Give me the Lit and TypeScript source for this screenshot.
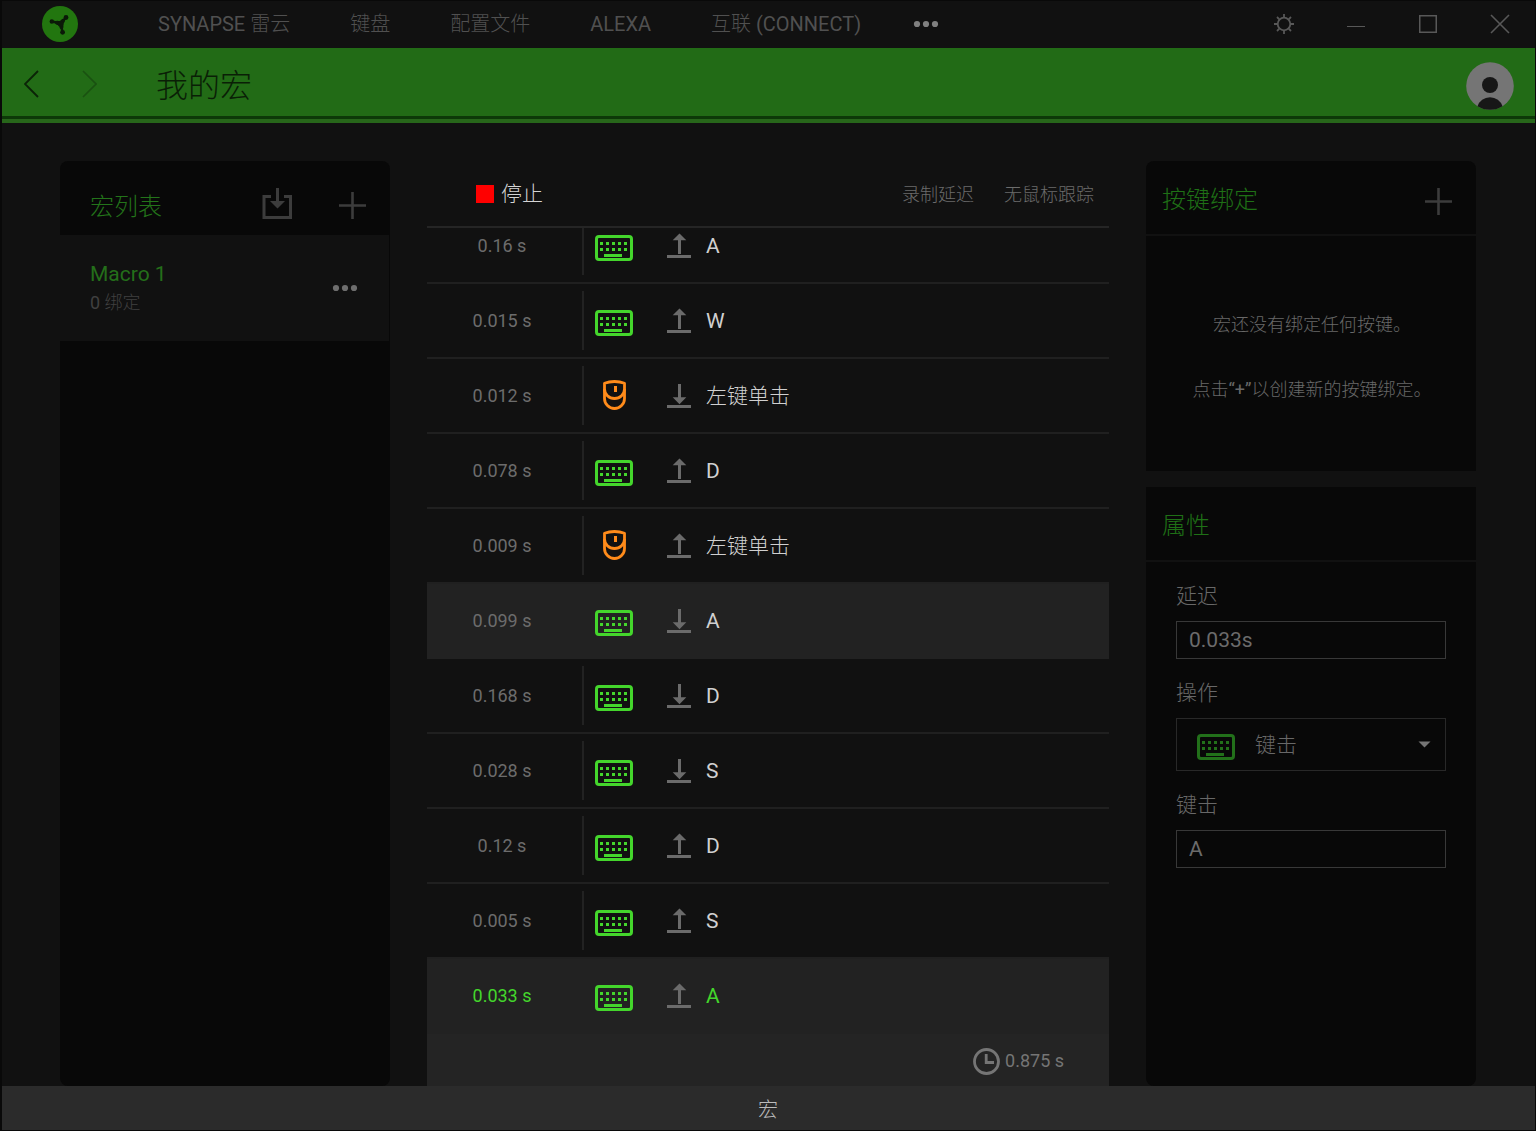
import { LitElement, html, css, svg } from "lit";
import { customElement, property } from "lit/decorators.js";
import { classMap } from "lit/directives/class-map.js";

type Device = "keyboard" | "mouse";

interface MacroEvent {
  delay: string;
  device: Device;
  direction: "up" | "down";
  label: string;
  state?: "marked" | "current";
}

const EVENTS: MacroEvent[] = [
  { delay: "0.16 s", device: "keyboard", direction: "up", label: "A" },
  { delay: "0.015 s", device: "keyboard", direction: "up", label: "W" },
  { delay: "0.012 s", device: "mouse", direction: "down", label: "左键单击" },
  { delay: "0.078 s", device: "keyboard", direction: "up", label: "D" },
  { delay: "0.009 s", device: "mouse", direction: "up", label: "左键单击" },
  { delay: "0.099 s", device: "keyboard", direction: "down", label: "A", state: "marked" },
  { delay: "0.168 s", device: "keyboard", direction: "down", label: "D" },
  { delay: "0.028 s", device: "keyboard", direction: "down", label: "S" },
  { delay: "0.12 s", device: "keyboard", direction: "up", label: "D" },
  { delay: "0.005 s", device: "keyboard", direction: "up", label: "S" },
  { delay: "0.033 s", device: "keyboard", direction: "up", label: "A", state: "current" },
];

const NAV = ["SYNAPSE 雷云", "键盘", "配置文件", "ALEXA", "互联 (CONNECT)"];

const shared = css`
  * {
    box-sizing: border-box;
  }
  button {
    margin: 0;
    padding: 0;
    border: 0;
    background: none;
    color: inherit;
    font: inherit;
    cursor: pointer;
  }
  svg {
    display: block;
    flex: none;
  }
  h1,
  h2,
  p,
  ul,
  ol {
    margin: 0;
    padding: 0;
    font-weight: inherit;
    list-style: none;
  }
  a {
    color: inherit;
    text-decoration: none;
  }
`;

const keyboardIcon = html`
  <svg width="39" height="31" viewBox="0 0 39 31" aria-hidden="true">
    <rect x="1.5" y="6.5" width="35" height="23" rx="2.5" fill="none" stroke="currentColor" stroke-width="3" />
    ${[5, 11, 17, 23, 29].map(
      (x) => svg`
        <rect x=${x} y="12" width="3" height="3" fill="currentColor" />
        <rect x=${x} y="18" width="3" height="3" fill="currentColor" />`
    )}
    <rect x="9" y="24" width="18" height="3" fill="currentColor" />
  </svg>
`;

const mouseIcon = html`
  <svg width="23" height="31" viewBox="0 0 23 31" aria-hidden="true">
    <g fill="none" stroke="currentColor" stroke-width="2.8" stroke-linejoin="round">
      <path d="M1.5 3.2Q6 1.5 11.5 1.5T21.500 3.200V18.500A10 10 0 0 1 1.500 18.500Z" />
      <path d="M1.5 9A10 9.500 0 0 0 21.500 9" />
    </g>
    <rect x="11" y="6" width="3" height="6" fill="currentColor" />
  </svg>
`;

const arrowUp = html`
  <svg width="24" height="25" viewBox="0 0 24 25" aria-hidden="true">
    <path d="M12.500 .5L19.300 7.200H14V21H11V7.200H5.700ZM0 22H24V25H0Z" fill="currentColor" />
  </svg>
`;

const arrowDown = html`
  <svg width="24" height="25" viewBox="0 0 24 25" aria-hidden="true">
    <path d="M12.500 21.300L19.300 14.300H14V1H11V14.300H5.700ZM0 22H24V25H0Z" fill="currentColor" />
  </svg>
`;

const dotsIcon = html`
  <svg width="26" height="8" viewBox="0 0 26 8" aria-hidden="true">
    <g fill="currentColor">
      <circle cx="4" cy="4" r="3.100" />
      <circle cx="13" cy="4" r="3.100" />
      <circle cx="22" cy="4" r="3.100" />
    </g>
  </svg>
`;

const plusIcon = html`
  <svg width="27" height="27" viewBox="0 0 27 27" aria-hidden="true">
    <path d="M13.500 0V27M0 13.500H27" stroke="currentColor" stroke-width="2.600" fill="none" />
  </svg>
`;

@customElement("title-bar")
class TitleBar extends LitElement {
  static styles = [
    shared,
    css`
      :host {
        display: flex;
        align-items: center;
        height: 48px;
        padding-left: 42px;
        color: #505050;
        font-size: 20px;
        line-height: 28px;
      }
      .logo {
        margin-right: 80px;
      }
      .links {
        display: flex;
        gap: 60px;
        white-space: nowrap;
      }
      .more {
        margin-left: 52px;
        color: #808080;
      }
      .controls {
        display: flex;
        margin-left: auto;
      }
      .control {
        display: grid;
        place-items: center;
        width: 72px;
        height: 48px;
        color: #585858;
      }
    `,
  ];

  render() {
    return html`
      <svg class="logo" width="36" height="36" viewBox="0 0 36 36" aria-hidden="true">
        <circle cx="18" cy="18" r="18" fill="#22760f" />
        <g stroke="#0b1a08" stroke-linecap="round" fill="none">
          <path d="M10 15.500L18.500 17.500L23.500 12M18.800 17.500L20.500 26" stroke-width="2.400" />
          <path d="M15 16.700L18.500 17.500L21 14.800M18.800 17.500L19.500 21" stroke-width="4" />
        </g>
        <g fill="#0b1a08">
          <circle cx="9.800" cy="15.500" r="2.200" />
          <circle cx="24" cy="11.500" r="2.400" />
          <circle cx="20.600" cy="26.300" r="2.400" />
          <circle cx="18.700" cy="17.700" r="3" />
        </g>
      </svg>
      <nav class="links">${NAV.map((item) => html`<a href="#">${item}</a>`)}</nav>
      <button class="more" aria-label="更多">${dotsIcon}</button>
      <div class="controls">
        <button class="control" aria-label="设置">
          <svg width="20" height="20" viewBox="0 0 20 20" aria-hidden="true">
            <circle cx="10" cy="10" r="6.300" fill="none" stroke="currentColor" stroke-width="1.800" />
            <path
              d="M10 0V3M10 17V20M0 10H3M17 10H20M3 3L5.300 5.300M14.700 14.700L17 17M17 3L14.700 5.300M5.300 14.700L3 17"
              stroke="currentColor"
              stroke-width="1.800"
            />
          </svg>
        </button>
        <button class="control" aria-label="最小化">
          <svg width="18" height="20" viewBox="0 0 18 20" aria-hidden="true">
            <path d="M0 12.500H18" stroke="currentColor" />
          </svg>
        </button>
        <button class="control" aria-label="最大化">
          <svg width="18" height="18" viewBox="0 0 18 18" aria-hidden="true">
            <rect x=".75" y=".75" width="16.500" height="16.500" fill="none" stroke="currentColor" stroke-width="1.500" />
          </svg>
        </button>
        <button class="control" aria-label="关闭">
          <svg width="20" height="20" viewBox="0 0 20 20" aria-hidden="true">
            <path d="M1 1L19 19M19 1L1 19" stroke="currentColor" stroke-width="1.600" />
          </svg>
        </button>
      </div>
    `;
  }
}

@customElement("page-banner")
class PageBanner extends LitElement {
  static styles = [
    shared,
    css`
      :host {
        display: block;
        background: #226b16;
        border-bottom: 4px solid #27661a;
      }
      .bar {
        display: flex;
        align-items: center;
        height: 71px;
        padding: 8px 22px 0 24px;
        border-bottom: 3px solid #0d3908;
      }
      .back,
      .forward {
        width: 58px;
        padding-bottom: 4px;
        color: #0b2307;
      }
      .forward {
        width: 74px;
        color: #1a5111;
      }
      .title {
        flex: 1;
        font-size: 32px;
        line-height: 40px;
        color: #0a1f06;
      }
    `,
  ];

  render() {
    return html`
      <div class="bar">
        <button class="back" aria-label="后退">
          <svg width="15" height="28" viewBox="0 0 15 28" aria-hidden="true">
            <path d="M14 1L1 14L14 27" fill="none" stroke="currentColor" stroke-width="1.800" />
          </svg>
        </button>
        <button class="forward" aria-label="前进" disabled>
          <svg width="15" height="28" viewBox="0 0 15 28" aria-hidden="true">
            <path d="M1 1L14 14L1 27" fill="none" stroke="currentColor" stroke-width="1.600" />
          </svg>
        </button>
        <h1 class="title">我的宏</h1>
        <button aria-label="账户">
          <svg width="48" height="48" viewBox="0 0 48 48" aria-hidden="true">
            <circle cx="24" cy="24" r="23.800" fill="#757575" />
            <circle cx="24" cy="23" r="8" fill="#171717" />
            <path d="M11.500 44.200A13 12.500 0 0 1 36.500 44.200A23.800 23.800 0 0 1 11.500 44.200Z" fill="#171717" />
          </svg>
        </button>
      </div>
    `;
  }
}

@customElement("macro-list")
class MacroList extends LitElement {
  static styles = [
    shared,
    css`
      :host {
        display: block;
        background: #080808;
        border-radius: 8px;
      }
      .head {
        display: flex;
        align-items: center;
        height: 74px;
        padding: 15px 24px 0 30px;
        color: #3c3c3c;
      }
      .title {
        flex: 1;
        padding-top: 2px;
        font-size: 24px;
        line-height: 32px;
        color: #23741a;
      }
      .add {
        margin-left: 46px;
      }
      .item {
        display: flex;
        align-items: center;
        margin-right: 1px;
        padding: 23px 31px 23px 30px;
        background: #111;
      }
      .text {
        flex: 1;
        padding-top: 2px;
      }
      .name {
        font-size: 21px;
        line-height: 28px;
        color: #246f1a;
      }
      .count {
        font-size: 18px;
        line-height: 30px;
        color: #404040;
      }
      .more {
        color: #6e6e6e;
      }
    `,
  ];

  render() {
    return html`
      <header class="head">
        <h2 class="title">宏列表</h2>
        <button aria-label="导入">
          <svg width="31" height="35" viewBox="0 0 31 35" aria-hidden="true">
            <path d="M9 8.500H2V29.500H28.500V8.500H22" fill="none" stroke="currentColor" stroke-width="3" />
            <path d="M14 0H17V13H23L15.500 20.500L8 13H14Z" fill="currentColor" />
          </svg>
        </button>
        <button class="add" aria-label="新建宏">${plusIcon}</button>
      </header>
      <ul>
        <li class="item">
          <div class="text">
            <p class="name">Macro 1</p>
            <p class="count">0 绑定</p>
          </div>
          <button class="more" aria-label="更多">${dotsIcon}</button>
        </li>
      </ul>
    `;
  }
}

@customElement("macro-recorder")
class MacroRecorder extends LitElement {
  @property({ attribute: false }) events: MacroEvent[] = [];

  static styles = [
    shared,
    css`
      :host {
        display: flex;
        flex-direction: column;
        min-width: 0;
        min-height: 0;
      }
      .head {
        display: flex;
        flex: none;
        align-items: center;
        gap: 30px;
        height: 67px;
        padding: 0 15px 0 49px;
        border-bottom: 2px solid #252525;
        font-size: 18px;
        line-height: 32px;
        color: #6c6c6c;
      }
      .option {
        padding-top: 2px;
      }
      .stop {
        display: flex;
        align-items: center;
        gap: 7px;
        margin-right: auto;
        font-size: 21px;
        color: #d4d4d4;
      }
      .square {
        width: 18px;
        height: 18px;
        background: #f00;
      }
      .list {
        display: flex;
        flex: 1 1 0;
        flex-direction: column;
        justify-content: flex-end;
        min-height: 0;
        overflow: hidden;
      }
      .row {
        display: grid;
        flex: none;
        grid-template-columns: 155px 63px 61px minmax(0, 1fr);
        align-items: center;
        height: 75px;
        border-bottom: 2px solid #202020;
        line-height: 30px;
      }
      .delay {
        padding-right: 5px;
        font-size: 18px;
        text-align: center;
        color: #6c6c6c;
      }
      .device {
        display: grid;
        place-items: center;
        height: 59px;
        border-left: 2px solid #222;
        color: #44d62c;
      }
      .mouse {
        color: #ff8b1a;
      }
      .arrow {
        padding-left: 22px;
        color: #6b6b6b;
      }
      .label {
        font-size: 21px;
        color: #d0d0d0;
      }
      .marked,
      .current {
        background: #222;
        border-color: #222;
      }
      .current .delay,
      .current .label {
        color: #44d62c;
      }
      .total {
        display: flex;
        flex: none;
        align-items: center;
        justify-content: flex-end;
        gap: 5px;
        height: 52px;
        padding: 2px 45px 0 0;
        background: #242424;
        font-size: 18px;
        line-height: 30px;
        color: #757575;
      }
    `,
  ];

  render() {
    return html`
      <header class="head">
        <button class="stop"><span class="square"></span>停止</button>
        <button class="option">录制延迟</button>
        <button class="option">无鼠标跟踪</button>
      </header>
      <ol class="list">
        ${this.events.map(
          (e) => html`
            <li class=${classMap({ row: true, marked: e.state === "marked", current: e.state === "current" })}>
              <span class="delay">${e.delay}</span>
              <span class=${classMap({ device: true, mouse: e.device === "mouse" })}>
                ${e.device === "mouse" ? mouseIcon : keyboardIcon}
              </span>
              <span class="arrow">${e.direction === "up" ? arrowUp : arrowDown}</span>
              <span class="label">${e.label}</span>
            </li>
          `
        )}
      </ol>
      <footer class="total">
        <svg width="27" height="27" viewBox="0 0 27 27" aria-hidden="true">
          <circle cx="13.500" cy="13.500" r="12" fill="none" stroke="currentColor" stroke-width="2.800" />
          <path d="M13.200 6V14.500H21" fill="none" stroke="currentColor" stroke-width="2.800" />
        </svg>
        <span>0.875 s</span>
      </footer>
    `;
  }
}

@customElement("binding-panels")
class BindingPanels extends LitElement {
  static styles = [
    shared,
    css`
      :host {
        display: flex;
        flex-direction: column;
        gap: 16px;
      }
      .card {
        background: #080808;
        border-radius: 8px 8px 0 0;
      }
      .properties {
        flex: 1;
        border-radius: 0 0 8px 8px;
      }
      .head {
        display: flex;
        align-items: center;
        justify-content: space-between;
        height: 75px;
        padding: 4px 24px 0 16px;
        border-bottom: 2px solid #111;
        color: #3c3c3c;
      }
      .title {
        font-size: 24px;
        line-height: 32px;
        color: #1f7016;
      }
      .add {
        padding-top: 4px;
      }
      .empty {
        display: flex;
        flex-direction: column;
        gap: 35px;
        padding: 74px 0 66px 2px;
        font-size: 18px;
        line-height: 30px;
        text-align: center;
        color: #686868;
      }
      .form {
        display: flex;
        flex-direction: column;
        gap: 19px;
        padding: 19px 30px;
      }
      .field {
        display: flex;
        flex-direction: column;
        gap: 10px;
        font-size: 21px;
        line-height: 30px;
        color: #686868;
      }
      .input {
        width: 100%;
        height: 38px;
        padding: 0 12px;
        border: 1px solid #383838;
        border-radius: 0;
        outline: 0;
        background: none;
        color: #6b6b6b;
        font: inherit;
      }
      .picker {
        display: grid;
        grid-template-columns: minmax(0, 1fr);
        align-items: center;
        height: 53px;
      }
      .picker > * {
        grid-area: 1 / 1;
      }
      .select {
        width: 100%;
        height: 100%;
        padding: 0 40px 0 78px;
        border: 1px solid #282828;
        border-radius: 0;
        outline: 0;
        appearance: none;
        background: none;
        color: #686868;
        font: inherit;
      }
      .select option {
        background: #111;
      }
      .device {
        margin-left: 21px;
        color: #22701a;
        pointer-events: none;
      }
      .caret {
        justify-self: end;
        margin-right: 15px;
        color: #757575;
        pointer-events: none;
      }
    `,
  ];

  render() {
    return html`
      <section class="card">
        <header class="head">
          <h2 class="title">按键绑定</h2>
          <button class="add" aria-label="新建绑定">${plusIcon}</button>
        </header>
        <div class="empty">
          <p>宏还没有绑定任何按键。</p>
          <p>点击“+”以创建新的按键绑定。</p>
        </div>
      </section>
      <section class="card properties">
        <header class="head"><h2 class="title">属性</h2></header>
        <div class="form">
          <div class="field">
            <label for="delay">延迟</label>
            <input class="input" id="delay" type="text" value="0.033s" />
          </div>
          <div class="field">
            <label for="action">操作</label>
            <div class="picker">
              <select class="select" id="action">
                <option>键击</option>
              </select>
              <span class="device">${keyboardIcon}</span>
              <svg class="caret" width="13" height="7" viewBox="0 0 13 7" aria-hidden="true">
                <path d="M.5 .5H12.500L6.500 6.500Z" fill="currentColor" />
              </svg>
            </div>
          </div>
          <div class="field">
            <label for="key">键击</label>
            <input class="input" id="key" type="text" value="A" />
          </div>
        </div>
      </section>
    `;
  }
}

@customElement("app-root")
class AppRoot extends LitElement {
  static styles = [
    shared,
    css`
      :host {
        display: flex;
        flex-direction: column;
        box-sizing: border-box;
        height: 100vh;
        background: #111;
        font-family: Roboto, "Noto Sans CJK SC Light", "Noto Sans CJK SC", sans-serif;
      }
      :host::after {
        content: "";
        position: fixed;
        inset: 0;
        border: 1px solid #090909;
        border-left-width: 2px;
        pointer-events: none;
      }
      .main {
        display: grid;
        flex: 1;
        grid-template-columns: 330px minmax(0, 1fr) 330px;
        gap: 37px;
        min-height: 0;
        padding: 38px 60px 0;
      }
      .status {
        flex: none;
        height: 45px;
        padding-top: 2px;
        background: #2b2b2b;
        font-size: 20px;
        line-height: 44px;
        text-align: center;
        color: #bcbcbc;
      }
    `,
  ];

  render() {
    return html`
      <title-bar></title-bar>
      <page-banner></page-banner>
      <main class="main">
        <macro-list></macro-list>
        <macro-recorder .events=${EVENTS}></macro-recorder>
        <binding-panels></binding-panels>
      </main>
      <footer class="status">宏</footer>
    `;
  }
}
